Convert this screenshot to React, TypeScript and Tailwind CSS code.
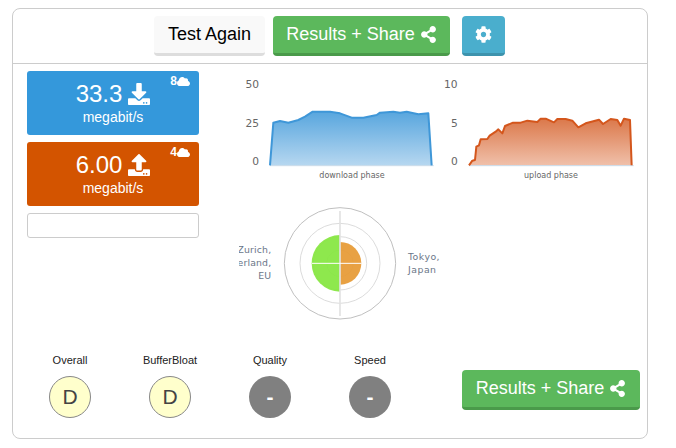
import { FaCloud, FaCog, FaDownload, FaShareAlt, FaUpload } from "react-icons/fa";

const font = { fontFamily: '"Liberation Sans", Arial, sans-serif' };
const chartFont = '"DejaVu Sans", Verdana, sans-serif';

function ShareButton({ className }: { className: string }) {
  return (
    <button className={`flex items-center justify-center gap-[5px] rounded border-b-[3px] border-b-[#4a9a4a] bg-[#5cb85c] text-[18px] text-white ${className}`}>
      Results + Share <FaShareAlt className="text-[17px]" />
    </button>
  );
}

function Tile({ value, up, count, color }: { value: string; up?: boolean; count: string; color: string }) {
  const Icon = up ? FaUpload : FaDownload;
  return (
    <div className={`relative flex h-[64px] flex-col items-center rounded-[3px] pt-[8px] text-white ${color}`}>
      <div className="absolute right-[9px] top-[2px] flex items-center text-[12px] font-bold leading-[16px]">
        {count}
        <FaCloud className="text-[13px]" />
      </div>
      <div className="flex h-[30px] items-center gap-[6px] text-[24px] leading-[30px]">
        {value}
        <Icon className="text-[22px]" />
      </div>
      <div className="-mt-[1px] text-[14px] leading-[18px]">megabit/s</div>
    </div>
  );
}

function Chart({ id, ticks, tickX, pts, label, labelX, stroke, top, bottom, className }: {
  id: string; ticks: string[]; tickX: number; pts: number[][]; label: string; labelX: number; stroke: string; top: string; bottom: string; className?: string;
}) {
  const line = pts.map((p) => p.join(",")).join(" ");
  return (
    <svg viewBox="0 0 624 345" className={`h-[115px] w-[208px] shrink-0 ${className ?? ""}`}>
      <defs>
        <linearGradient id={id} x1="0" y1="0" x2="0" y2="1">
          <stop offset="0" stopColor={top} />
          <stop offset="1" stopColor={bottom} />
        </linearGradient>
      </defs>
      <polygon points={line} fill={`url(#${id})`} />
      <line x1={pts[0][0]} x2={pts[pts.length - 1][0] + 6} y1="287" y2="287" stroke="#c6d8e8" strokeWidth="3" />
      <polyline points={line} fill="none" stroke={stroke} strokeWidth="6" strokeLinejoin="round" />
      {ticks.map((t, i) => (
        <text key={t} x={tickX} y={[53, 170, 284][i]} textAnchor="end" fontSize="32" fill="#666" fontFamily={chartFont}>{t}</text>
      ))}
      <text x={labelX} y="324" textAnchor="middle" fontSize="24" fill="#666" fontFamily={chartFont}>{label}</text>
    </svg>
  );
}

function Radar() {
  const cx = 330, cy = 190;
  return (
    <svg viewBox="27 0 633 375" className="ml-[9px] mt-[15px] h-[125px] w-[211px]">
      {[40, 80, 120].map((r) => (
        <circle key={r} cx={cx} cy={cy} r={r} fill="none" stroke="#dcdcdc" strokeWidth="3" />
      ))}
      <path d={`M${cx} ${cy - 85}A85 85 0 0 0 ${cx} ${cy + 85}Z`} fill="#85e640" fillOpacity="0.93" />
      <path d={`M${cx} ${cy - 64}A64 64 0 0 1 ${cx} ${cy + 64}Z`} fill="#e69a35" fillOpacity="0.93" />
      <circle cx={cx} cy={cy} r="167" fill="none" stroke="#c0c0c0" strokeWidth="3" />
      <line x1={cx} x2={cx} y1="33" y2="348" stroke="#e2e2e2" strokeWidth="5" />
      <line x1="246" x2="395" y1={cy} y2={cy} stroke="#fff" strokeWidth="3" />
      <g fontSize="28" fill="#6a7688" fontFamily={chartFont} letterSpacing="0.5">
        <text x="124" y="158" textAnchor="end">Zurich,</text>
        <text x="124" y="197" textAnchor="end">Switzerland,</text>
        <text x="124" y="236" textAnchor="end">EU</text>
        <text x="534" y="179" letterSpacing="1.5">Tokyo,</text>
        <text x="534" y="218" letterSpacing="1.5">Japan</text>
      </g>
    </svg>
  );
}

function Grade({ label, value, gray }: { label: string; value: string; gray?: boolean }) {
  return (
    <div className="flex w-[100px] flex-col items-center">
      <div className="text-[11px] leading-[14px] text-[#222]">{label}</div>
      <div className={`mt-[9px] flex h-[42px] w-[42px] items-center justify-center rounded-full text-[21px] ${gray ? "bg-[#808080] font-bold text-white" : "border border-[#888] bg-[#ffffcc] text-[#444]"}`}>
        {value}
      </div>
    </div>
  );
}

const down = [[120,286],[130,158],[150,153],[175,158],[205,150],[225,140],[248,125],[300,125],[330,130],[365,143],[400,143],[440,135],[450,128],[490,125],[510,128],[530,125],[565,133],[595,130],[605,286]];
const up = [[90,286],[100,272],[108,270],[112,230],[120,226],[125,208],[145,207],[152,197],[170,185],[178,178],[190,190],[198,168],[222,158],[245,158],[265,152],[295,156],[305,146],[320,146],[345,157],[355,147],[380,147],[400,152],[418,172],[440,160],[480,149],[492,162],[515,147],[535,150],[545,167],[555,146],[573,150],[578,286]];

export default function App() {
  return (
    <div className="h-[448px] w-[676px] bg-white pl-[12px] pt-[8px]" style={font}>
      <div className="flex h-[431px] w-[636px] flex-col rounded-lg border border-[#ccc]">
        <div className="flex h-[55px] items-center justify-center border-b border-[#ccc] pb-[1px] pr-[1px]">
          <button className="mr-[8px] h-[40px] w-[111px] rounded border-b-[3px] border-b-[#ddd] bg-[#f9f9f9] text-[18px] text-black">Test Again</button>
          <ShareButton className="h-[40px] w-[177px]" />
          <button className="ml-[12px] flex h-[40px] w-[43px] items-center justify-center rounded border-b-[3px] border-b-[#3d93ad] bg-[#4aaecd] text-[17px] text-white">
            <FaCog />
          </button>
        </div>
        <div className="flex pl-[14px] pt-[6px]">
          <div className="mt-[1px] flex w-[172px] flex-col gap-[7px]">
            <Tile value="33.3" count="8" color="bg-[#3498db]" />
            <Tile value="6.00" count="4" up color="bg-[#d35400]" />
            <div className="h-[25px] rounded-[3px] border border-[#ccc]" />
          </div>
          <div className="ml-[31px] flex flex-col">
            <div className="flex">
              <Chart id="dl" ticks={["50", "25", "0"]} tickX={87} pts={down} label="download phase" labelX={366} stroke="#3f97d8" top="#58a6de" bottom="#b6d7f0" />
              <Chart id="ul" className="ml-[1px]" ticks={["10", "5", "0"]} tickX={56} pts={up} label="upload phase" labelX={336} stroke="#d4561c" top="#db784a" bottom="#f0c0aa" />
            </div>
            <Radar />
          </div>
        </div>
        <div className="mt-[28px] flex items-start pl-[7px]">
          <Grade label="Overall" value="D" />
          <Grade label="BufferBloat" value="D" />
          <Grade label="Quality" value="-" gray />
          <Grade label="Speed" value="-" gray />
          <ShareButton className="ml-[42px] mt-[17px] h-[40px] w-[178px]" />
        </div>
      </div>
    </div>
  );
}
